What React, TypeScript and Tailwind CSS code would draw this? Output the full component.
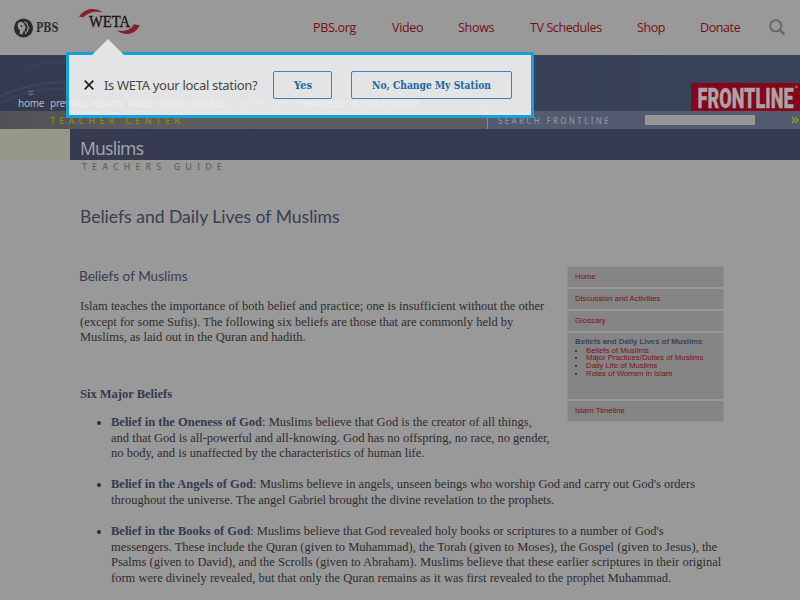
import React from "react";

const serif = "font-['Liberation_Serif',serif]";
const sans = "font-['Noto_Sans',sans-serif]";
const open = "font-['Open_Sans',sans-serif]";
const lato = "font-['Lato',sans-serif]";

function PbsLogo() {
  return (
    <svg width="50" height="20" viewBox="0 0 50 20" className="block">
      <circle cx="9.5" cy="10" r="9.5" fill="#2b2b2d" />
      <path d="M5.2 4.2C7.8 3.3 10 4.5 10.5 6.8l1.4 3-1.1.5v2c0 1-.8 1.2-2 1.1v2.8H5.800v-4.100C3.200 9.500 3 6 5.200 4.200z" fill="#999" />
      <circle cx="7.400" cy="8.200" r=".9" fill="#2b2b2d" />
      <path d="M10.200 3.700c1.700.3 2.800 1.400 3.100 3.200l1.500 3.300-1.200.4v2c0 1.100-.7 1.500-2 1.400v1.900" fill="none" stroke="#999" strokeWidth="1.100" />
      <text x="22" y="14.400" fontSize="12.500" fontWeight="700" fontFamily="'DejaVu Serif', serif" textLength="22.500" lengthAdjust="spacingAndGlyphs" fill="#2f2f31">PBS</text>
    </svg>
  );
}

function WetaLogo() {
  return (
    <svg width="62" height="28" viewBox="0 0 62 28" className="block">
      <path d="M0 8.500C6 .2 15-1.400 23.500 4.200 16 2.700 8.700 4.400 4 9.600z" fill="#85202d" />
      <path d="M61 17.500C55 27 47 28.500 37.500 22.500 46 24 51.500 22 55 16.300z" fill="#85202d" />
      <text x="10" y="18.700" fontSize="16" stroke="#151515" strokeWidth=".3" fontFamily="'Liberation Serif', serif" textLength="41" lengthAdjust="spacingAndGlyphs" fill="#151515">WETA</text>
    </svg>
  );
}

function Header() {
  return (
    <header className={`flex h-[55px] ${open} text-[12.500px] text-[#750f17]`}>
      <div className="pl-[14px] pt-[18px] w-[79px]"><PbsLogo /></div>
      <div className="pt-[8px] w-[234px]"><WetaLogo /></div>
      <nav className="flex pt-[18px] leading-[20px] whitespace-nowrap">
        <a className="w-[79px] tracking-[-0.300px]">PBS.org</a>
        <a className="w-[66px] tracking-[-0.3px]">Video</a>
        <a className="w-[72px] tracking-[-0.3px]">Shows</a>
        <a className="w-[107px] tracking-[-0.4px]">TV Schedules</a>
        <a className="w-[63px] tracking-[-0.4px]">Shop</a>
        <a className="w-[69px] tracking-[-0.4px]">Donate</a>
      </nav>
      <svg width="17" height="17" viewBox="0 0 17 17" className="mt-[19px]">
        <circle cx="6.800" cy="6.800" r="5.600" fill="none" stroke="#676767" strokeWidth="1.900" />
        <path d="M10.800 10.800l4.500 4.500" stroke="#676767" strokeWidth="2.600" />
      </svg>
    </header>
  );
}

function Banner() {
  return (
    <div>
      <div className="relative flex h-[56px] justify-between bg-linear-to-r from-[#343b50] to-[#39435a]">
        <svg width="110" height="56" className="absolute left-0 top-0">
          <g fill="none" stroke="#4b5266" strokeWidth="2" opacity=".5">
            <path d="M-2 43C18 32 45 22 112 31" />
            <path d="M-2 50C20 36 50 28 112 38" opacity=".6" />
            <path d="M20 14C50 4 70 6 112 12" opacity=".4" />
          </g>
          <path d="M28.500 35.500l2.500 1.500 2.500-1.500M28.500 38.500l2.500 1.500 2.500-1.500" fill="none" stroke="#7f838b" />
        </svg>
        <div className={`relative flex pl-[18px] pt-[41px] text-[10px] leading-[14px] tracking-[-0.250px] text-[#b4b6bc] whitespace-nowrap ${sans}`}>
          <span className="w-[32px]">home</span>
          <span className="w-[78px]">previous reports</span>
          <span className="w-[60px]">watch online</span>
          <span className="w-[46px]">about us</span>
          <span className="w-[66px] opacity-50">teacher center</span>
          <span className="w-[52px]">newsletter</span>
          <span>e-mail frontline</span>
        </div>
        <div className="mt-[28px] h-[28px] w-[109px] bg-[#87051a]">
          <svg width="109" height="28" className="block overflow-visible">
            <text x="6.500" y="24.500" fontSize="28" fontWeight="900" stroke="#aaa4a5" strokeWidth=".3" fontFamily="Roboto, sans-serif" textLength="96" lengthAdjust="spacingAndGlyphs" fill="#aaa4a5">FRONTLINE</text>
            <circle cx="105.500" cy="4" r="1.300" fill="#aa6870" />
          </svg>
        </div>
      </div>
      <div className={`flex h-[18px] text-[8px] leading-[18px] whitespace-nowrap ${sans}`}>
        <div className="w-[487px] bg-linear-to-r from-[#505056] to-[#5d5d5f] to-30% pl-[50px] pt-px text-[#8d8d08] text-[9px] font-medium tracking-[4.250px]">TEACHER CENTER</div>
        <div className="flex w-[313px] items-center border-l border-[#878b94] bg-[#535b71] pl-[10px] text-[#8e939d]">
          <span className="w-[147px] pt-px font-medium tracking-[2.300px]">SEARCH FRONTLINE</span>
          <span className="h-[10px] w-[110px] bg-[#969696]" />
          <svg width="8" height="8" viewBox="0 0 8 8" className="ml-[36px]">
            <path d="M1 1l2.500 3L1 7M4.200 1l2.500 3-2.500 3" fill="none" stroke="#a0a000" strokeWidth="1.200" />
          </svg>
        </div>
      </div>
      <div className="flex h-[31px]">
        <div className="w-[70px] bg-[#97978a]" />
        <div className={`flex-1 bg-[#363b51] pl-[10px] pt-[7px] text-[17.500px] leading-[24px] tracking-[-0.800px] text-[#a0a2a9] ${sans}`}>Muslims</div>
      </div>
      <div className={`h-[14px] pl-[82px] text-[9px] leading-[14px] tracking-[5.050px] text-[#606060] font-medium whitespace-nowrap ${sans}`}>TEACHERS GUIDE</div>
    </div>
  );
}

function StationPrompt() {
  return (
    <div className="absolute left-[66px] top-[52px] h-[66px] w-[468px] border-[3px] border-[#16a0d9] bg-[#f2f2f2]/92">
      <svg width="32" height="19" className="absolute left-[23px] -top-[16px]">
        <path d="M0 16L16 0 32 16z" fill="#e4e4e4" />
      </svg>
      <div className="flex pt-[16px] items-center">
        <svg width="10" height="10" className="ml-[15px]">
          <path d="M.7.7l8.600 8.600M9.300.7L.7 9.300" stroke="#202020" strokeWidth="1.700" />
        </svg>
        <span className={`ml-[10px] w-[169px] whitespace-nowrap text-[13px] leading-[20px] tracking-[-0.320px] text-[#47484a] ${sans}`}>Is WETA your local station?</span>
        <button className="h-[28px] w-[59px] rounded-[2px] border border-[#3c83b9]">
          <svg width="57" height="26" className="block"><text x="20" y="17" fontSize="10.500" fontWeight="700" fontFamily="'DejaVu Serif', serif" textLength="18" lengthAdjust="spacingAndGlyphs" fill="#1768a6">Yes</text></svg>
        </button>
        <button className="ml-[19px] h-[28px] w-[161px] rounded-[2px] border border-[#3c83b9]">
          <svg width="159" height="26" className="block"><text x="20" y="17" fontSize="10.500" fontWeight="700" fontFamily="'DejaVu Serif', serif" textLength="119" lengthAdjust="spacingAndGlyphs" fill="#1768a6">No, Change My Station</text></svg>
        </button>
      </div>
    </div>
  );
}

function Sidebar() {
  return (
    <aside className="mt-[92px] w-[157px] self-start border border-[#8f8f8f] flex flex-col gap-[2px] bg-[#999] font-['Liberation_Sans',sans-serif] text-[7.800px] text-[#7b1118] whitespace-nowrap">
      <a className="block h-[20px] bg-[#858585] pl-[7px] leading-[20px]">Home</a>
      <a className="block h-[20px] bg-[#858585] pl-[7px] leading-[20px]">Discussion and Activities</a>
      <a className="block h-[20px] bg-[#858585] pl-[7px] leading-[20px]">Glossary</a>
      <div className="h-[66px] bg-[#858585] pl-[7px] pt-[5px] leading-[7.900px]">
        <div className="font-bold text-[#3c4459] leading-[8.500px]">Beliefs and Daily Lives of Muslims</div>
        <ul className="list-disc pl-[11px] marker:text-[#292929]">
          <li>Beliefs of Muslims</li>
          <li>Major Practices/Duties of Muslims</li>
          <li>Daily Life of Muslims</li>
          <li>Roles of Women in Islam</li>
        </ul>
      </div>
      <a className="block h-[20px] bg-[#858585] pl-[7px] leading-[20px]">Islam Timeline</a>
    </aside>
  );
}

const beliefs = [
  { title: "Belief in the Oneness of God", lines: [": Muslims believe that God is the creator of all things,", "and that God is all-powerful and all-knowing. God has no offspring, no race, no gender,", "no body, and is unaffected by the characteristics of human life."] },
  { title: "Belief in the Angels of God", lines: [": Muslims believe in angels, unseen beings who worship God and carry out God's orders", "throughout the universe. The angel Gabriel brought the divine revelation to the prophets."] },
  { title: "Belief in the Books of God", lines: [": Muslims believe that God revealed holy books or scriptures to a number of God's", "messengers. These include the Quran (given to Muhammad), the Torah (given to Moses), the Gospel (given to Jesus), the", "Psalms (given to David), and the Scrolls (given to Abraham). Muslims believe that these earlier scriptures in their original", "form were divinely revealed, but that only the Quran remains as it was first revealed to the prophet Muhammad."] },
];

export default function App() {
  return (
    <div className="relative h-[600px] w-[800px] overflow-hidden bg-[#999]">
      <Header />
      <Banner />
      <StationPrompt />
      <main className={`pl-[80px] text-[12.500px] leading-[15.650px] text-[#2d2d2d] whitespace-nowrap ${serif}`}>
        <div className="flex h-[213px]">
          <div className="w-[487px]">
            <h1 className={`pt-[31px] text-[17.550px] leading-[24px] text-[#373d52] ${lato}`}>Beliefs and Daily Lives of Muslims</h1>
            <h2 className={`mt-[37px] -ml-px text-[13.600px] leading-[20px] text-[#373d52] ${lato}`}>Beliefs of Muslims</h2>
            <p className="mt-[13px]">Islam teaches the importance of both belief and practice; one is insufficient without the other<br />(except for some Sufis). The following six beliefs are those that are commonly held by<br />Muslims, as laid out in the Quran and hadith.</p>
          </div>
          <Sidebar />
        </div>
        <h3 className="font-bold text-[#333b50]">Six Major Beliefs</h3>
        <ul className="mt-[12.200px] flex flex-col gap-[15.500px]">
          {beliefs.map((b) => (
            <li key={b.title} className="relative pl-[31px]">
              <span className="absolute left-[17px] top-[6px] h-[4px] w-[4px] rounded-full bg-[#2d2d2d]" />
              <b className="text-[#333b50]">{b.title}</b>
              {b.lines.map((l, i) => <React.Fragment key={l}>{i > 0 && <br />}{l}</React.Fragment>)}
            </li>
          ))}
        </ul>
      </main>
    </div>
  );
}
